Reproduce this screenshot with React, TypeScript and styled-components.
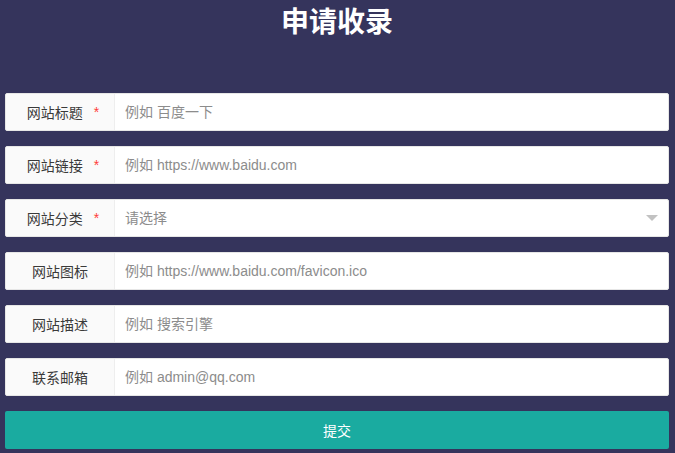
import React from "react";
import styled, { createGlobalStyle } from "styled-components";

const Global = createGlobalStyle`
  html, body { margin: 0; padding: 0; background: #35345c; }
  body { font-family: "Liberation Sans", "Noto Sans CJK SC", sans-serif; font-size: 14px; }
  * { box-sizing: border-box; }
`;

const Page = styled.div`
  min-height: 453px;
  background: #35345c;
  padding: 0 6px 0 5px;
`;

const Title = styled.h2`
  margin: 0 0 53px;
  height: 40px;
  line-height: 40px;
  text-align: center;
  color: #fff;
  font-size: 28px;
  font-weight: bold;
  font-family: "Noto Sans CJK SC", sans-serif;
`;

const Form = styled.form`
  display: flex;
  flex-direction: column;
  gap: 15px;
  margin: 0;
`;

const Row = styled.div`
  display: flex;
  height: 38px;
  background: #fff;
  border: 1px solid #e6e6e6;
  border-radius: 2px;
  position: relative;
`;

const Label = styled.label`
  flex: 0 0 109px;
  display: flex;
  align-items: center;
  justify-content: center;
  background: #fafafa;
  border-right: 1px solid #eee;
  color: #3a3a3a;
  font-size: 14px;
  font-family: "Noto Sans CJK SC", sans-serif;
  border-radius: 2px 0 0 2px;
`;

const Star = styled.span`
  color: #ff3b3b;
  margin-left: 11px;
  margin-right: -6px;
  font-family: "Liberation Sans", sans-serif;
`;

const Input = styled.input`
  flex: 1;
  border: none;
  outline: none;
  background: transparent;
  padding: 0 10px;
  font-family: "Liberation Sans", "Noto Sans CJK SC", sans-serif;
  font-size: 14px;
  color: #333;
  &::placeholder { color: #8c8c8c; }
`;

const Arrow = styled.i`
  position: absolute;
  right: 10px;
  top: 50%;
  margin-top: -3px;
  width: 0;
  height: 0;
  border-left: 6px solid transparent;
  border-right: 6px solid transparent;
  border-top: 6px solid #c2c2c2;
`;

const Submit = styled.button`
  height: 38px;
  border: none;
  border-radius: 2px;
  background: #1aaba0;
  color: #fff;
  font-size: 14px;
  font-family: "Noto Sans CJK SC", sans-serif;
  cursor: pointer;
`;

type Field = { label: string; placeholder: string; required?: boolean; select?: boolean };

const fields: Field[] = [
  { label: "网站标题", placeholder: "例如 百度一下", required: true },
  { label: "网站链接", placeholder: "例如 https://www.baidu.com", required: true },
  { label: "网站分类", placeholder: "请选择", required: true, select: true },
  { label: "网站图标", placeholder: "例如 https://www.baidu.com/favicon.ico" },
  { label: "网站描述", placeholder: "例如 搜索引擎" },
  { label: "联系邮箱", placeholder: "例如 admin@qq.com" },
];

export default function App() {
  return (
    <Page>
      <Global />
      <Title>申请收录</Title>
      <Form onSubmit={(e) => e.preventDefault()}>
        {fields.map((f) => (
          <Row key={f.label}>
            <Label>
              {f.label}
              {f.required && <Star>*</Star>}
            </Label>
            <Input placeholder={f.placeholder} readOnly={f.select} />
            {f.select && <Arrow />}
          </Row>
        ))}
        <Submit type="submit">提交</Submit>
      </Form>
    </Page>
  );
}
